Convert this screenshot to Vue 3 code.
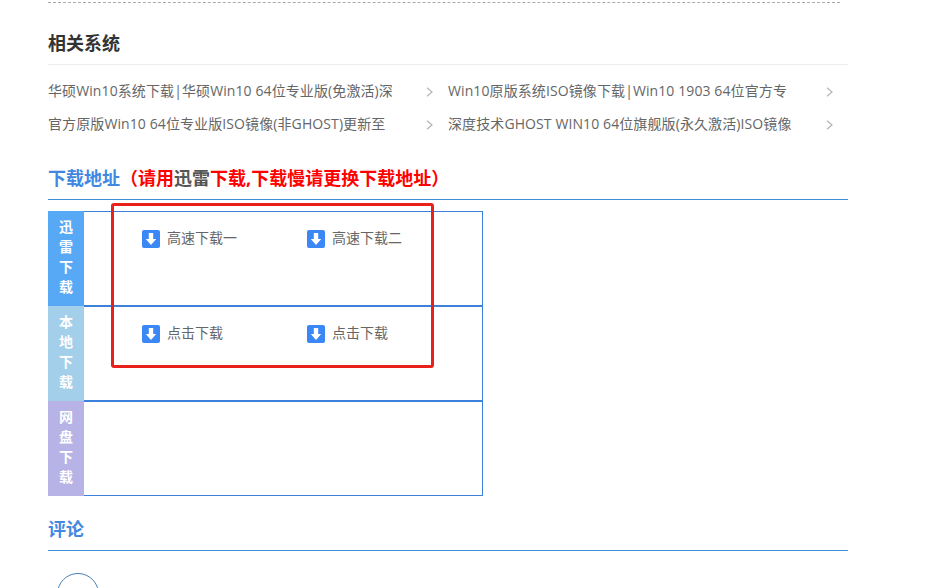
<script setup>
const related = [
  '华硕Win10系统下载|华硕Win10 64位专业版(免激活)深',
  'Win10原版系统ISO镜像下载|Win10 1903 64位官方专',
  '官方原版Win10 64位专业版ISO镜像(非GHOST)更新至',
  '深度技术GHOST WIN10 64位旗舰版(永久激活)ISO镜像'
]
const rows = [
  { label: ['迅', '雷', '下', '载'], cls: 'blue', links: ['高速下载一', '高速下载二'] },
  { label: ['本', '地', '下', '载'], cls: 'sky', links: ['点击下载', '点击下载'] },
  { label: ['网', '盘', '下', '载'], cls: 'violet', links: [] }
]
</script>

<template>
  <div class="page">
    <div class="dash"></div>

    <h2 class="plain-title">相关系统</h2>
    <ul class="related">
      <li v-for="r in related" :key="r">
        <span class="rel-text">{{ r }}</span>
        <svg class="chev" width="7" height="10" viewBox="0 0 7 10"><path d="M1 .8 L6 5 L1 9.2" fill="none" stroke="#b4b4b4" stroke-width="1.2"/></svg>
      </li>
    </ul>

    <h2 class="blue-title first">下载地址<span class="warn">（请用<i>迅雷</i>下载,下载慢请更换下载地址）</span></h2>

    <div class="table-wrap">
      <div class="table">
        <div v-for="row in rows" :key="row.cls" class="row">
          <div class="side" :class="row.cls"><span v-for="c in row.label" :key="c">{{ c }}</span></div>
          <div class="links">
            <a v-for="(l, i) in row.links" :key="i" class="dl">
              <svg class="ico" width="18" height="18" viewBox="0 0 18 18">
                <rect width="18" height="18" rx="2" fill="#3a87f5"/>
                <path d="M6.8 3h4.4v6h3l-5.2 6-5.2-6h3z" fill="#fff"/>
              </svg>
              <span class="dl-text">{{ l }}</span>
            </a>
          </div>
        </div>
      </div>
      <div class="annot"></div>
    </div>

    <h2 class="blue-title second">评论</h2>
    <div class="avatar"></div>
  </div>
</template>

<style>
html, body { margin: 0; background: #fff; overflow: hidden; }
</style>

<style scoped>
.page {
  width: 940px;
  height: 588px;
  overflow: hidden;
  box-sizing: border-box;
  padding: 2px 92px 0 48px;
  font-family: "Open Sans", "Noto Sans CJK SC", sans-serif;
  color: #666;
}
.dash { width: 792px; border-top: 1px dashed #aaa; }
h2 { margin: 0; font-size: 18px; font-weight: 700; line-height: 24px; }
.plain-title {
  margin-top: 28px;
  padding-bottom: 9px;
  color: #333;
  border-bottom: 1px solid #ececec;
}
.related {
  list-style: none;
  margin: 8px 0 0;
  padding: 0;
  display: grid;
  grid-template-columns: 400px 400px;
  grid-auto-rows: 33px;
}
.related li { display: flex; align-items: center; justify-content: space-between; padding-right: 15px; }
.rel-text { font-size: 14px; letter-spacing: 0.1px; white-space: nowrap; }
.chev { flex: none; margin-top: 4px; }
.blue-title { color: #4388e0; border-bottom: 1px solid #3d8fd6; }
.first { margin-top: 27px; padding-bottom: 9px; }
.warn { color: #f00; }
.warn i { font-style: normal; color: #555; }
.table-wrap { position: relative; margin-top: 11px; width: 435px; }
.table { border-right: 1px solid #3c82dc; }
.row { display: flex; height: 95px; box-shadow: inset 0 1px 0 #3c82dc, inset 0 -1px 0 #3c82dc; }
.side {
  width: 36px;
  flex: none;
  box-sizing: border-box;
  padding-top: 6px;
  display: flex;
  flex-direction: column;
  align-items: center;
  color: #fff;
  font-size: 14px;
  font-weight: 700;
  line-height: 20px;
}
.blue { background: #57a9f5; }
.sky { background: #a3cfea; }
.violet { background: #b7b3e6; }
.links { display: flex; padding: 19px 0 0 58px; }
.dl { width: 165px; height: 18px; display: flex; align-items: flex-start; gap: 7px; font-size: 14px; color: #666; }
.dl-text { line-height: 16px; }
.ico { flex: none; }
.annot {
  position: absolute;
  left: 63px;
  top: -8px;
  width: 323px;
  height: 165px;
  box-sizing: border-box;
  border: 3px solid #e8211a;
  border-radius: 3px;
}
.second { margin-top: 21px; padding-bottom: 9px; }
.avatar {
  margin: 22px 0 0 9px;
  width: 42px;
  height: 42px;
  box-sizing: border-box;
  border: 1px solid #4a7fb5;
  border-radius: 50%;
}
</style>
